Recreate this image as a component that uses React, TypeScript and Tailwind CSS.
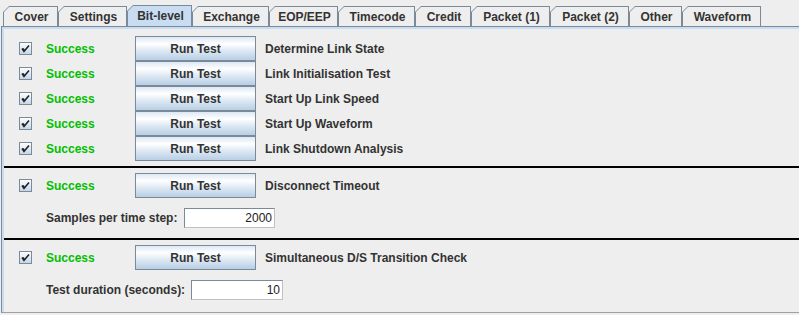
import React from "react";

// Metal/Ocean look: bold 12px Dialog ≈ Liberation Sans
const tabs: [string, number][] = [
  ["Cover", 55],
  ["Settings", 69],
  ["Bit-level", 65],
  ["Exchange", 77],
  ["EOP/EEP", 69],
  ["Timecode", 77],
  ["Credit", 56],
  ["Packet (1)", 79],
  ["Packet (2)", 79],
  ["Other", 53],
  ["Waveform", 79],
];

const bitTests = [
  "Determine Link State",
  "Link Initialisation Test",
  "Start Up Link Speed",
  "Start Up Waveform",
  "Link Shutdown Analysis",
];

function Tab({ label, width, selected }: { label: string; width: number; selected: boolean }) {
  return (
    <div
      style={{ width }}
      className={`shrink-0 bg-[#7a8a99] pt-px pl-px pr-px [clip-path:polygon(6px_0,100%_0,100%_100%,0_100%,0_6px)] ${
        selected ? "h-[21px]" : "h-[20px]"
      }`}
    >
      <div
        className={`flex h-full items-center justify-center pl-[2px] [clip-path:polygon(5px_0,100%_0,100%_100%,0_100%,0_5px)] ${
          selected ? "bg-[#c8ddf2]" : "bg-[#eeeeee]"
        }`}
      >
        {label}
      </div>
    </div>
  );
}

function Check() {
  return (
    <div className="flex size-[13px] shrink-0 items-center justify-center border border-[#7a8a99] bg-gradient-to-b from-[#ffffff] to-[#c4d6ea]">
      <svg width="9" height="9" viewBox="0 0 9 9">
        <path d="M1 4.5 L3 7.5 L8 1.5 M2 4.5 L3 6" stroke="#222" strokeWidth="1.6" fill="none" />
      </svg>
    </div>
  );
}

function RunButton() {
  return (
    <button
      type="button"
      className="h-[25px] w-[121px] shrink-0 border border-[#7a8a99] bg-[linear-gradient(to_bottom,#dde8f3_0%,#ffffff_30%,#dde8f3_60%,#b8cfe5_100%)] font-bold text-[#333333]"
    >
      Run Test
    </button>
  );
}

function TestRow({ name }: { name: string }) {
  return (
    <div className="flex h-[25px] items-center pl-[15px]">
      <Check />
      <span className="ml-[14px] w-[89px] text-[#00c000]">Success</span>
      <RunButton />
      <span className="ml-[9px]">{name}</span>
    </div>
  );
}

function NumField({ label, labelW, width, value }: { label: string; labelW: number; width: number; value: string }) {
  return (
    <div className="flex h-[20px] items-center pl-[42px]">
      <span style={{ width: labelW }}>{label}</span>
      <div
        style={{ width }}
        className="flex h-[20px] items-center justify-end border border-[#7a8a99] border-r-[#c0c0c0] border-b-[#c0c0c0] bg-white pr-[2px] font-normal text-[#222]"
      >
        {value}
      </div>
    </div>
  );
}

export default function App() {
  return (
    <div className="h-[315px] w-[799px] overflow-hidden bg-[#eeeeee] font-['Liberation_Sans',Arial,sans-serif] text-[12px] font-bold text-[#333333]">
      <div className="flex h-[26px] items-end pl-[3px]">
        {tabs.map(([t, w]) => (
          <Tab key={t} label={t} width={w} selected={t === "Bit-level"} />
        ))}
      </div>

      <div className="h-[287px] border-t border-l border-b border-t-[#7a8a99] border-l-[#7a8a99] border-b-[#a0a0a0] ml-px">
        <div className="h-full border-t-2 border-l-2 border-[#c8ddf2]">
          <div className="pt-[7px]">
            {bitTests.map((t) => (
              <TestRow key={t} name={t} />
            ))}
          </div>

          <div className="mt-[5px] h-[2px] bg-black" />
          <div className="mt-[5px]">
            <TestRow name="Disconnect Timeout" />
          </div>
          <div className="mt-[10px]">
            <NumField label="Samples per time step:" labelW={138} width={91} value="2000" />
          </div>

          <div className="mt-[10px] h-[2px] bg-black" />
          <div className="mt-[5px]">
            <TestRow name="Simultaneous D/S Transition Check" />
          </div>
          <div className="mt-[10px]">
            <NumField label="Test duration (seconds):" labelW={145} width={92} value="10" />
          </div>
        </div>
      </div>
    </div>
  );
}
